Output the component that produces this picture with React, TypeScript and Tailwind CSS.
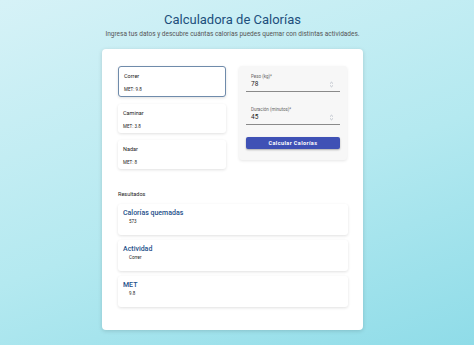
import React from "react";

function Spinner() {
  return (
    <svg width="5" height="7" viewBox="0 0 5 7" className="text-gray-400">
      <path d="M1 2.6 L2.5 1.2 L4 2.6" fill="none" stroke="currentColor" strokeWidth="0.6" />
      <path d="M1 4.4 L2.5 5.8 L4 4.4" fill="none" stroke="currentColor" strokeWidth="0.6" />
    </svg>
  );
}

function Field({ label, value }: { label: string; value: string }) {
  return (
    <div className="flex flex-col border-b border-[#8a8a8a] pb-[2px]">
      <span className="text-[4.5px] leading-[6px] text-[#666] pl-[5px]">{label}</span>
      <div className="flex items-center justify-between pl-[5px] pr-[6px]">
        <span className="text-[6.5px] leading-[9px] text-[#222]">{value}</span>
        <Spinner />
      </div>
    </div>
  );
}

function Activity({ name, met, selected }: { name: string; met: string; selected?: boolean }) {
  return (
    <div
      className={
        selected
          ? "flex flex-col h-[31px] rounded-[3px] border border-[#6f8bab] bg-white px-[5px] pt-[6px] shadow-[0_1px_3px_rgba(0,0,0,0.12)]"
          : "flex flex-col h-[29px] rounded-[3px] bg-white px-[5px] pt-[6px] shadow-[0_1px_3px_rgba(0,0,0,0.12)]"
      }
    >
      <span className="text-[5.5px] leading-[7px] text-[#222]">{name}</span>
      <span className="mt-[7px] text-[4.5px] leading-[6px] text-[#222]">{met}</span>
    </div>
  );
}

function Result({ title, value }: { title: string; value: string }) {
  return (
    <div className="flex flex-col h-[31px] rounded-[3px] bg-white px-[5px] pt-[4px] shadow-[0_1px_3px_rgba(0,0,0,0.12)]">
      <span className="text-[7px] leading-[10px] font-medium text-[#24508a]">{title}</span>
      <span className="pl-[6px] text-[4.5px] leading-[7px] text-[#222]">{value}</span>
    </div>
  );
}

export default function App() {
  return (
    <div
      className="w-[474px] h-[345px] overflow-hidden pr-[9px] flex flex-col items-center bg-[linear-gradient(160deg,#d6f2f7_0%,#b4e9f0_55%,#8fdce8_100%)]"
      style={{ fontFamily: "Roboto, 'Liberation Sans', sans-serif" }}
    >
      <h1 className="mt-[11px] text-[13px] leading-[18px] text-[#1d4f7c]">Calculadora de Calorías</h1>
      <p className="mt-[1px] text-[6.5px] leading-[9px] text-[#555]">
        Ingresa tus datos y descubre cuántas calorías puedes quemar con distintas actividades.
      </p>
      <div className="mt-[10px] w-[261px] h-[281px] rounded-[4px] bg-white shadow-[0_1px_4px_rgba(0,0,0,0.15)] pl-[16px] pr-[15px] pt-[17px] flex flex-col">
        <div className="flex gap-[13px]">
          <div className="w-[108px] flex flex-col gap-[7px]">
            <Activity name="Correr" met="MET: 9.8" selected />
            <Activity name="Caminar" met="MET: 3.8" />
            <Activity name="Nadar" met="MET: 8" />
          </div>
          <div className="w-[108px] h-[94px] rounded-[3px] bg-[#f7f7f7] shadow-[0_1px_3px_rgba(0,0,0,0.1)] px-[7px] pt-[8px] flex flex-col">
            <Field label="Peso (kg)*" value="78" />
            <div className="h-[15px]" />
            <Field label="Duración (minutos)*" value="45" />
            <button className="mt-[12px] h-[12px] rounded-[2px] bg-[#3f51b5] text-white text-[5.5px] font-bold tracking-[0.4px] shadow-[0_1px_2px_rgba(0,0,0,0.3)]">
              Calcular Calorías
            </button>
          </div>
        </div>
        <div className="mt-[22px] text-[5.5px] leading-[7px] text-[#222]">Resultados</div>
        <div className="mt-[6px] flex flex-col gap-[5px]">
          <Result title="Calorías quemadas" value="573" />
          <Result title="Actividad" value="Correr" />
          <Result title="MET" value="9.8" />
        </div>
      </div>
    </div>
  );
}
